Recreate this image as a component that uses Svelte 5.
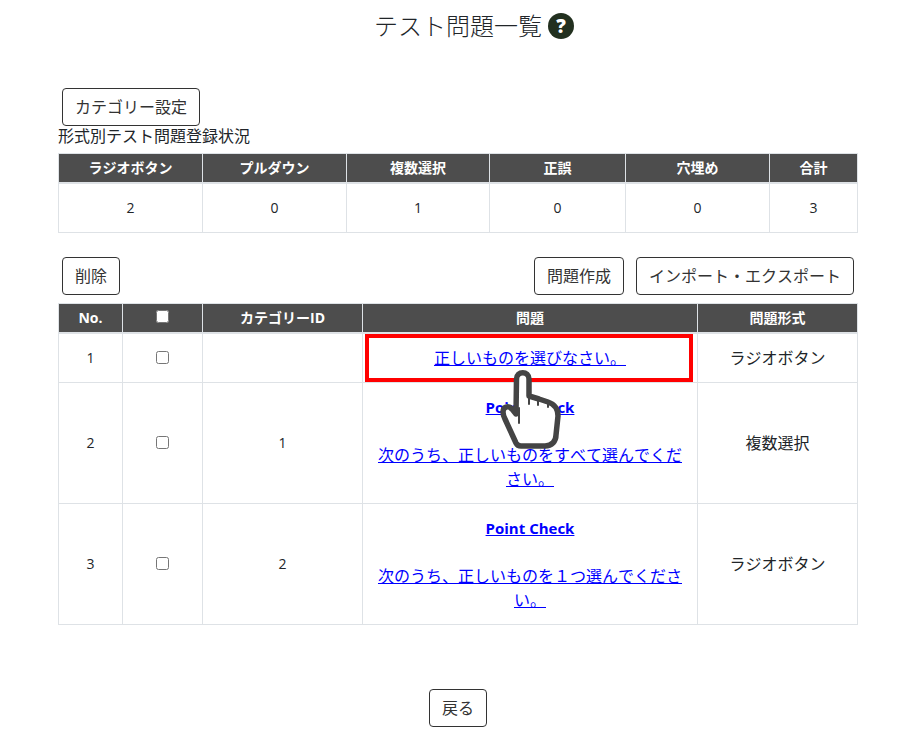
<script lang="ts">
  const counts = [
    { label: "ラジオボタン", value: 2 },
    { label: "プルダウン", value: 0 },
    { label: "複数選択", value: 1 },
    { label: "正誤", value: 0 },
    { label: "穴埋め", value: 0 },
    { label: "合計", value: 3 },
  ];
  const countWidths = [144, 144, 143, 136, 144, 88];

  const questions = [
    { no: 1, category: "", title: "", text: "正しいものを選びなさい。", type: "ラジオボタン" },
    { no: 2, category: "1", title: "Point Check", text: "次のうち、正しいものをすべて選んでください。", type: "複数選択" },
    { no: 3, category: "2", title: "Point Check", text: "次のうち、正しいものを１つ選んでください。", type: "ラジオボタン" },
  ];
</script>

<div class="page">
  <h1 class="title">
    テスト問題一覧
    <span class="help" aria-label="ヘルプ">?</span>
  </h1>

  <div class="tools first"><button>カテゴリー設定</button></div>
  <p class="caption">形式別テスト問題登録状況</p>

  <table class="counts">
    <colgroup>
      {#each countWidths as w}
        <col style:width="{w}px" />
      {/each}
    </colgroup>
    <thead>
      <tr>
        {#each counts as c}
          <th>{c.label}</th>
        {/each}
      </tr>
    </thead>
    <tbody>
      <tr>
        {#each counts as c}
          <td>{c.value}</td>
        {/each}
      </tr>
    </tbody>
  </table>

  <div class="tools split">
    <button>削除</button>
    <div class="right">
      <button>問題作成</button>
      <button>インポート・エクスポート</button>
    </div>
  </div>

  <table class="list">
    <colgroup>
      <col class="c-no" />
      <col class="c-check" />
      <col class="c-cat" />
      <col class="c-text" />
      <col />
    </colgroup>
    <thead>
      <tr>
        <th>No.</th>
        <th><input type="checkbox" class="all" /></th>
        <th>カテゴリーID</th>
        <th>問題</th>
        <th>問題形式</th>
      </tr>
    </thead>
    <tbody>
      {#each questions as q}
        <tr>
          <td>{q.no}</td>
          <td><input type="checkbox" /></td>
          <td>{q.category}</td>
          <td>
            <a href="#q">
              {#if q.title}
                <strong>{q.title}</strong><br /><br />
              {/if}
              {q.text}
            </a>
          </td>
          <td class="type">{q.type}</td>
        </tr>
      {/each}
    </tbody>
  </table>

  <div class="back"><button>戻る</button></div>

  <!-- annotation over the table -->
  <div class="frame"></div>
  <svg class="hand" viewBox="0 0 90 100" width="90" height="100" aria-hidden="true">
    <path
      d="M31 54 L27 49 C23 45 18 47 18 52 C18 55 19 57 20 59 L31 83 C32 85 33 86 36 86 H60 C67 86 71 81 71 75 L73 56 C73 48 69 44 63 42 L54 39 L44 36 V19 C44 10.5 31.5 10.5 31.5 19 Z"
      fill="#fff"
      stroke="#444"
      stroke-width="5.5"
      stroke-linejoin="round"
    />
    <path d="M34 48 V63 M44 36 V44 M53 39 V45 M63 42 V47" fill="none" stroke="#444" stroke-width="2" stroke-linecap="round" />
  </svg>
</div>

<style>
  :global(body) {
    margin: 0;
    background: #fff;
    color: #212529;
    font-family: "Open Sans", "Noto Sans CJK JP", sans-serif;
    font-size: 16px;
    font-kerning: none;
    line-height: 24px;
  }

  .page {
    position: relative;
    width: 800px;
    margin-left: 58px;
    height: 747px;
  }

  .title {
    display: flex;
    justify-content: center;
    align-items: center;
    gap: 6px;
    height: 52px;
    margin: 0;
    padding-left: 32px;
    color: #212529;
    font-size: 24px;
    font-weight: 300;
  }
  .help {
    display: flex;
    align-items: center;
    justify-content: center;
    width: 26px;
    height: 26px;
    border-radius: 50%;
    background: #22301f;
    color: #fff;
    font-size: 19px;
    font-weight: 800;
  }

  .tools {
    display: flex;
    padding: 0 4px;
  }
  .tools.first {
    margin-top: 36px;
  }
  .tools.split {
    justify-content: space-between;
    margin: 24px 0 8px;
  }
  .right {
    display: flex;
    gap: 12px;
  }

  button {
    height: 38px;
    padding: 0 12px;
    border: 1px solid #333;
    border-radius: 4px;
    background: #fff;
    color: #333;
    font: inherit;
    font-kerning: none;
  }

  .caption {
    height: 27px;
    margin: 0;
    line-height: 21px;
  }

  table {
    width: 800px;
    border-collapse: collapse;
    table-layout: fixed;
    text-align: center;
  }
  th,
  td {
    border: 1px solid #dee2e6;
  }
  th {
    height: 28px;
    padding: 0;
    background: #4d4d4d;
    color: #fff;
    font-size: 14px;
    font-weight: 700;
    line-height: 20px;
  }
  td {
    padding: 12px;
    font-size: 14px;
  }
  thead {
    border-bottom: 2px solid #dee2e6;
  }

  .counts td {
    height: 24px;
  }

  .c-no { width: 64px; }
  .c-check { width: 80px; }
  .c-cat { width: 160px; }
  .c-text { width: 335px; }

  .list td {
    padding: 12px 10px;
  }
  .list td:nth-child(4) {
    padding: 12px 14px;
    font-size: 16px;
  }
  .list td:nth-child(4) strong {
    font-size: 15px;
    font-kerning: normal;
  }
  .type {
    font-size: 16px !important;
  }

  input[type="checkbox"] {
    width: 13px;
    height: 13px;
    margin: 0 0 4px;
    vertical-align: middle;
  }
  input.all {
    margin: 0 0 5px;
  }

  a {
    color: #00f;
  }

  .back {
    display: flex;
    justify-content: center;
    margin-top: 64px;
  }

  .frame {
    position: absolute;
    left: 307px;
    top: 334px;
    width: 328px;
    height: 48px;
    box-sizing: border-box;
    border: 4px solid #f00;
  }
  .hand {
    position: absolute;
    left: 427px;
    top: 360px;
  }
</style>
